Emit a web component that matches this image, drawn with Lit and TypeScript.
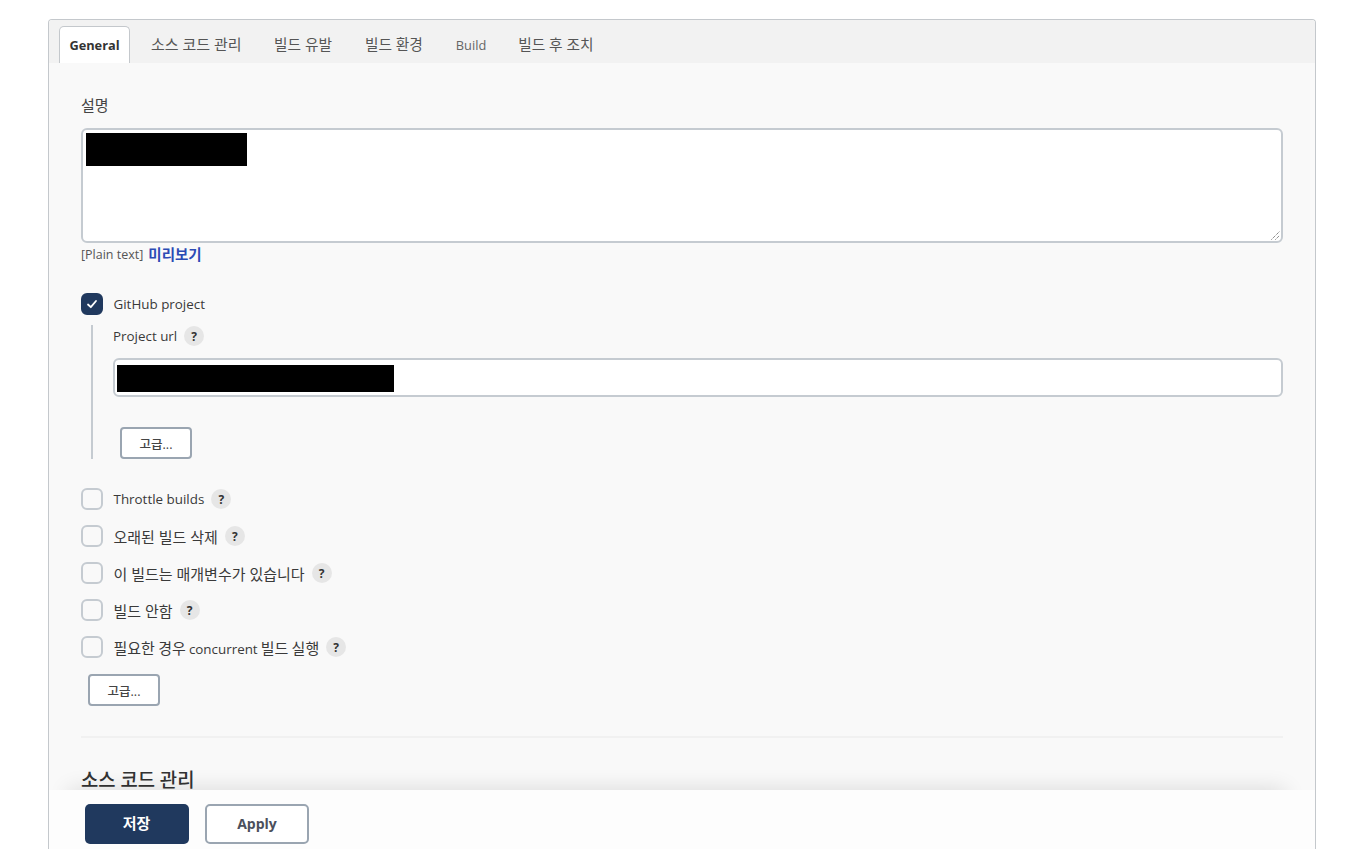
import { LitElement, html, css } from "lit";
import { customElement } from "lit/decorators.js";

const FONT = css`"Open Sans", "Noto Sans CJK KR", sans-serif`;

@customElement("app-root")
export class AppRoot extends LitElement {
  static styles = css`
    :host {
      display: block;
      height: 849px;
      overflow: hidden;
      background: #fff;
      font-family: ${FONT};
      font-size: 13.4px;
      color: #333;
      box-sizing: border-box;
      padding: 19px 38px 0 48px;
    }
    * { box-sizing: border-box; }
    .ko { font-size: 15px; }
    .panel {
      height: 830px;
      border: 1px solid #c4c8cc;
      border-bottom: none;
      border-radius: 4px 4px 0 0;
      display: flex;
      flex-direction: column;
      overflow: hidden;
    }
    .tabs {
      height: 43px;
      flex: none;
      background: #f2f2f2;
      display: flex;
      align-items: flex-end;
      padding-left: 10px;
    }
    .tab {
      height: 37px;
      padding: 0 16.5px 3px;
      display: flex;
      align-items: center;
      color: #555;
      white-space: nowrap;
    }
    .tab.ko { font-size: 14.7px; }
    .tab.first { font-size: 15px; padding-right: 16px; }
    .tab.latin { font-size: 12.8px; padding: 0 15.5px 0 16.5px; color: #666; }
    .tab.active {
      width: 71px;
      padding: 0 0 1px;
      margin-right: 4.5px;
      justify-content: center;
      background: #fff;
      border: 1px solid #c4c8cc;
      border-bottom: none;
      border-radius: 5px 5px 0 0;
      color: #333;
      font-weight: 700;
      font-size: 12.8px;
    }
    .content {
      flex: 1;
      min-height: 0;
      overflow: hidden;
      background: #f9f9f9;
      padding: 33px 32px 0;
    }
    .label { height: 19px; line-height: 19px; color: #444; }
    .textarea {
      margin-top: 13px;
      height: 115px;
      background: #fff;
      border: 2px solid #c5cbd1;
      border-radius: 6px;
      padding: 3px;
      position: relative;
    }
    .redact { background: #000; }
    .redact.a { width: 161px; height: 33px; }
    .redact.b { width: 277px; height: 27px; }
    .grip {
      position: absolute;
      right: 1px;
      bottom: 1px;
      width: 9px;
      height: 9px;
    }
    .hint {
      margin-top: 1px;
      height: 20px;
      display: flex;
      align-items: center;
      gap: 5px;
      font-size: 12.5px;
      color: #555;
    }
    .hint a {
      color: #2b4bb5;
      font-weight: 700;
      font-size: 14.5px;
      text-decoration: none;
      position: relative;
      top: -1px;
    }
    .row {
      display: flex;
      align-items: center;
      height: 22px;
      color: #3a3a3a;
      white-space: pre;
    }
    .row.tight { word-spacing: -0.5px; }
    .check {
      width: 22px;
      height: 22px;
      flex: none;
      border: 2px solid #c5cbd1;
      border-radius: 6px;
      background: transparent;
      margin-right: 10.5px;
      display: flex;
      align-items: center;
      justify-content: center;
    }
    .check.on { background: #20395e; border-color: #20395e; }
    .help {
      width: 20px;
      height: 20px;
      margin-left: 7px;
      border-radius: 50%;
      background: #e6e6e6;
      color: #333;
      font-size: 12px;
      font-weight: 700;
      display: inline-flex;
      align-items: center;
      justify-content: center;
      flex: none;
    }
    .github { margin-top: 29px; }
    .nested {
      margin: 10px 0 0 10px;
      border-left: 2px solid #c5cbd1;
      padding-left: 20px;
      height: 134px;
    }
    .input {
      margin-top: 11px;
      height: 39px;
      background: #fff;
      border: 2px solid #c5cbd1;
      border-radius: 6px;
      padding: 5px 2px;
    }
    .adv {
      width: 72px;
      height: 32px;
      border: 2px solid #9aa5b1;
      border-radius: 4px;
      background: #fff;
      color: #444;
      font: inherit;
      font-size: 12.5px;
      font-weight: 500;
      padding: 0;
    }
    .nested .adv { margin: 30px 0 0 7px; display: block; }
    .options {
      margin-top: 29px;
      display: flex;
      flex-direction: column;
      gap: 15px;
    }
    .outer-adv { margin: 16px 0 0 7px; display: block; }
    hr {
      margin: 30px 0 0;
      border: none;
      height: 2px;
      background: #f1f1f1;
    }
    h2 {
      margin: 30px 0 0;
      font-size: 18.8px;
      line-height: 24px;
      font-weight: 500;
      color: #333;
    }
    .bar {
      flex: none;
      height: 59px;
      background: #fdfdfd;
      display: flex;
      align-items: flex-start;
      gap: 16px;
      padding: 14px 0 0 36px;
      position: relative;
    }
    .shadow {
      position: absolute;
      left: 0;
      right: 0;
      top: -30px;
      height: 30px;
      overflow: hidden;
      pointer-events: none;
    }
    .shadow::before {
      content: "";
      position: absolute;
      left: 20px;
      right: 30px;
      top: 30px;
      height: 20px;
      box-shadow: 0 0 22px rgba(0, 0, 0, 0.14);
    }
    .btn {
      width: 104px;
      height: 40px;
      border-radius: 5px;
      font: inherit;
      font-size: 14px;
      font-weight: 700;
      padding: 0 0 2px;
    }
    .btn.primary { background: #20395e; color: #fff; border: none; font-size: 15px; padding: 0 1px 3px 0; }
    .btn.secondary { background: #fff; color: #4b4f5c; border: 2px solid #9aa5b1; }
  `;

  private opt(label: unknown, tight = false) {
    return html`<div class="row ${tight ? "tight" : ""}"><span class="check"></span><span>${label}</span><span class="help">?</span></div>`;
  }

  render() {
    return html`
      <div class="panel">
        <div class="tabs">
          <div class="tab active">General</div>
          <div class="tab ko first">소스 코드 관리</div>
          <div class="tab ko">빌드 유발</div>
          <div class="tab ko">빌드 환경</div>
          <div class="tab latin">Build</div>
          <div class="tab ko">빌드 후 조치</div>
        </div>
        <div class="content">
          <div class="label ko">설명</div>
          <div class="textarea">
            <div class="redact a"></div>
            <svg class="grip" viewBox="0 0 9 9" fill="none" stroke="#555" stroke-width="1" stroke-dasharray="1 1">
              <path d="M0.5 8.5 L8.5 0.5 M4.5 8.5 L8.5 4.5" />
            </svg>
          </div>
          <div class="hint"><span>[Plain text]</span><a href="#">미리보기</a></div>
          <div class="row github">
            <span class="check on">
              <svg width="12" height="12" viewBox="0 0 12 12" fill="none" stroke="#fff" stroke-width="1.8" stroke-linecap="round" stroke-linejoin="round">
                <path d="M2 6.5 L4.8 9.2 L10 3" />
              </svg>
            </span>
            <span>GitHub project</span>
          </div>
          <div class="nested">
            <div class="row"><span>Project url</span><span class="help">?</span></div>
            <div class="input"><div class="redact b"></div></div>
            <button class="adv">고급...</button>
          </div>
          <div class="options">
            ${this.opt("Throttle builds")}
            ${this.opt(html`<span class="ko">오래된 빌드 삭제</span>`)}
            ${this.opt(html`<span class="ko">이 빌드는 매개변수가 있습니다</span>`)}
            ${this.opt(html`<span class="ko">빌드 안함</span>`)}
            ${this.opt(html`<span class="ko">필요한 경우</span> concurrent <span class="ko">빌드 실행</span>`, true)}
          </div>
          <button class="adv outer-adv">고급...</button>
          <hr />
          <h2>소스 코드 관리</h2>
        </div>
        <div class="bar">
          <div class="shadow"></div>
          <button class="btn primary">저장</button>
          <button class="btn secondary">Apply</button>
        </div>
      </div>
    `;
  }
}
